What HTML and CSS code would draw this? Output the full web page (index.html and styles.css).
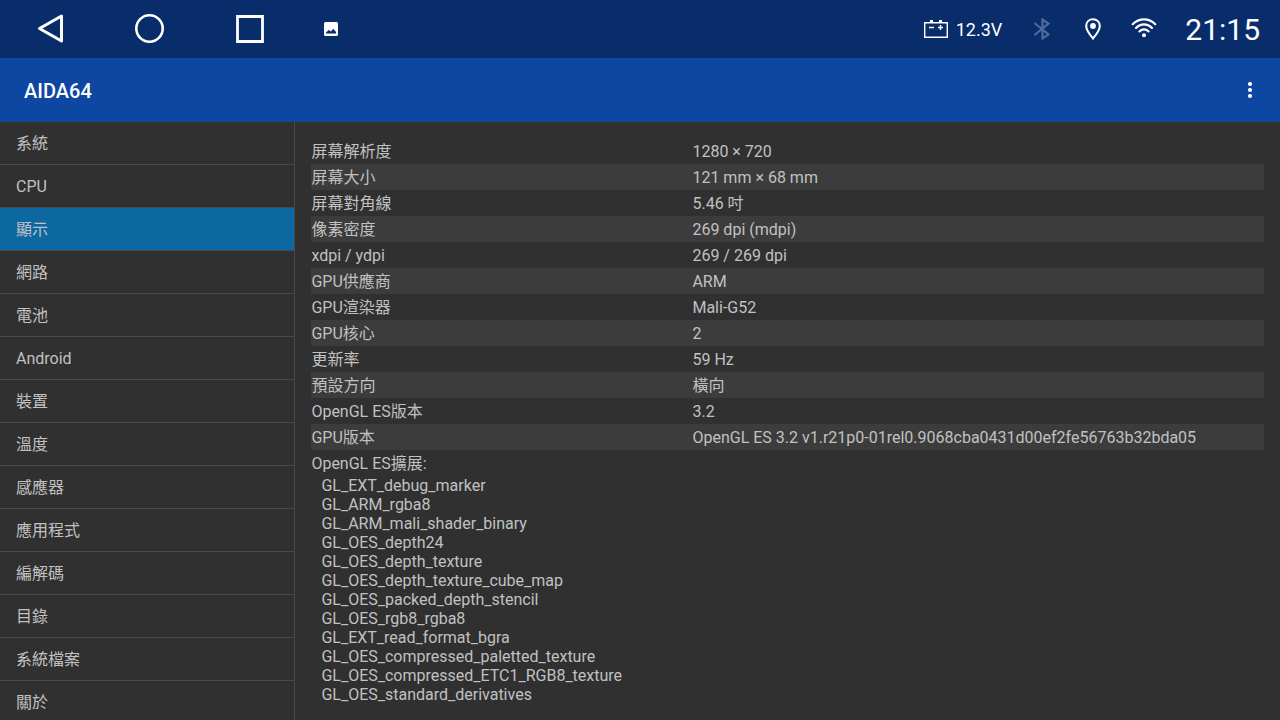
FILE: index.html
```html
<!DOCTYPE html>
<html lang="zh-Hant">
<head>
<meta charset="utf-8">
<meta name="viewport" content="width=device-width, initial-scale=1">
<title>AIDA64</title>
<link rel="stylesheet" href="styles.css">
</head>
<body>
<div class="screen">
  <header class="status-bar">
    <div class="nav-keys">
      <button class="nav-key" type="button" aria-label="返回"><svg width="30" height="32" viewBox="0 0 30 32"><path d="M26.5 3v25L4.500 15.500z" fill="none" stroke="#fff" stroke-width="3" stroke-linejoin="round"/></svg></button>
      <button class="nav-key" type="button" aria-label="主畫面"><svg width="30" height="30" viewBox="0 0 30 30"><circle cx="14.5" cy="14.5" r="13.2" fill="none" stroke="#fff" stroke-width="2.6"/></svg></button>
      <button class="nav-key" type="button" aria-label="最近使用"><svg width="28" height="28" viewBox="0 0 28 28"><path d="M1.500 1.500h25v25h-25z" fill="none" stroke="#fff" stroke-width="2.800"/></svg></button>
      <button class="nav-key nav-key-small" type="button" aria-label="螢幕截圖"><svg width="14" height="14" viewBox="0 0 14 14"><path fill="#fff" fill-rule="evenodd" d="M1.500 0h11A1.500 1.500 0 0 1 14 1.500v11a1.500 1.500 0 0 1-1.500 1.500h-11A1.500 1.500 0 0 1 0 12.500v-11A1.500 1.500 0 0 1 1.500 0zM2 11.500h10V10L9.200 6.800 7 9.500 4.800 8 2 10.500z"/></svg></button>
    </div>
    <div class="status-icons">
      <svg class="battery" width="24" height="18" viewBox="0 0 24 18"><path d="M.7 2.700h22.600v14.600H.7z" fill="none" stroke="#fff" stroke-width="1.400"/><path d="M6 0h3v2.500H6zM15 0h3v2.500h-3zM5 6.800h5v1.400H5zM14 6.800h5v1.400h-5zM15.800 5h1.400v5h-1.400z" fill="#fff"/></svg>
      <span class="voltage">12.3V</span>
      <svg class="bluetooth" width="18" height="22" viewBox="0 0 18 22"><path d="M1.500 5l14 11.500L9.500 20.500v-19L15.500 5.500 1.500 17" fill="none" stroke="#4f6a9c" stroke-width="2.200"/></svg>
      <svg class="pin" width="16" height="22" viewBox="0 0 16 22"><path d="M8 1.200c-4 0-6.800 2.900-6.800 6.800C1.200 12.500 5.500 17.500 8 20.500c2.500-3 6.800-8 6.800-12.500 0-3.900-2.800-6.800-6.800-6.800z" fill="none" stroke="#fff" stroke-width="2"/><circle cx="8" cy="8" r="2.900" fill="#fff"/></svg>
      <svg class="wifi" width="26" height="22" viewBox="0 0 26 22"><g fill="none" stroke="#fff" stroke-width="2.200" stroke-linecap="round"><path d="M1.700 6.300C8-.2 18-.2 24.300 6.300"/><path d="M5 9.900c4.500-4.700 11.500-4.700 16 0"/><path d="M8.400 13.400c2.600-2.700 6.600-2.700 9.200 0"/></g><circle cx="13" cy="17.300" r="2" fill="#fff"/></svg>
      <time class="clock">21:15</time>
    </div>
  </header>
  <div class="app-bar">
    <h1 class="app-title">AIDA64</h1>
    <button class="more" type="button" aria-label="更多選項"><svg width="24" height="24" viewBox="0 0 24 24" fill="#fff"><circle cx="12" cy="6" r="2.100"/><circle cx="12" cy="12" r="2.100"/><circle cx="12" cy="18" r="2.100"/></svg></button>
  </div>
  <div class="content">
    <nav class="menu">
      <a class="menu-item" href="#">系統</a>
      <a class="menu-item" href="#">CPU</a>
      <a class="menu-item selected" href="#" aria-current="page">顯示</a>
      <a class="menu-item" href="#">網路</a>
      <a class="menu-item" href="#">電池</a>
      <a class="menu-item" href="#">Android</a>
      <a class="menu-item" href="#">裝置</a>
      <a class="menu-item" href="#">溫度</a>
      <a class="menu-item" href="#">感應器</a>
      <a class="menu-item" href="#">應用程式</a>
      <a class="menu-item" href="#">編解碼</a>
      <a class="menu-item" href="#">目錄</a>
      <a class="menu-item" href="#">系統檔案</a>
      <a class="menu-item" href="#">關於</a>
    </nav>
    <main class="details">
      <table class="info">
        <tbody>
          <tr><th scope="row">屏幕解析度</th><td>1280 × 720</td></tr>
          <tr><th scope="row">屏幕大小</th><td>121 mm × 68 mm</td></tr>
          <tr><th scope="row">屏幕對角線</th><td>5.46 吋</td></tr>
          <tr><th scope="row">像素密度</th><td>269 dpi (mdpi)</td></tr>
          <tr><th scope="row">xdpi / ydpi</th><td>269 / 269 dpi</td></tr>
          <tr><th scope="row">GPU供應商</th><td>ARM</td></tr>
          <tr><th scope="row">GPU渲染器</th><td>Mali-G52</td></tr>
          <tr><th scope="row">GPU核心</th><td>2</td></tr>
          <tr><th scope="row">更新率</th><td>59 Hz</td></tr>
          <tr><th scope="row">預設方向</th><td>橫向</td></tr>
          <tr><th scope="row">OpenGL ES版本</th><td>3.2</td></tr>
          <tr><th scope="row">GPU版本</th><td>OpenGL ES 3.2 v1.r21p0-01rel0.9068cba0431d00ef2fe56763b32bda05</td></tr>
        </tbody>
      </table>
      <h2 class="extensions-title">OpenGL ES擴展:</h2>
      <ul class="extensions">
        <li>GL_EXT_debug_marker</li>
        <li>GL_ARM_rgba8</li>
        <li>GL_ARM_mali_shader_binary</li>
        <li>GL_OES_depth24</li>
        <li>GL_OES_depth_texture</li>
        <li>GL_OES_depth_texture_cube_map</li>
        <li>GL_OES_packed_depth_stencil</li>
        <li>GL_OES_rgb8_rgba8</li>
        <li>GL_EXT_read_format_bgra</li>
        <li>GL_OES_compressed_paletted_texture</li>
        <li>GL_OES_compressed_ETC1_RGB8_texture</li>
        <li>GL_OES_standard_derivatives</li>
      </ul>
    </main>
  </div>
</div>
</body>
</html>
```
FILE: styles.css
```css
* {
  box-sizing: border-box;
}

body {
  margin: 0;
  background: #303030;
  color: #c1c1c1;
  font: 16px/24px Roboto, "Noto Sans CJK TC", sans-serif;
}

button {
  display: flex;
  align-items: center;
  justify-content: center;
  padding: 0;
  border: 0;
  background: none;
}

svg {
  display: block;
  flex: none;
}

.screen {
  display: flex;
  flex-direction: column;
  height: 100vh;
  overflow: hidden;
}

.status-bar {
  display: flex;
  flex: none;
  justify-content: space-between;
  height: 58px;
  background: #082d6a;
  color: #fff;
}

.nav-keys {
  display: flex;
}

.nav-key {
  width: 100px;
}

.nav-key-small {
  width: 62px;
}

.status-icons {
  display: flex;
  align-items: center;
  padding-right: 20px;
}

.voltage {
  margin-left: 8px;
  padding-top: 2px;
  font-size: 18px;
}

.bluetooth {
  margin-left: 31px;
}

.pin {
  margin-left: 34px;
}

.wifi {
  margin-left: 30px;
}

.clock {
  margin-left: 28px;
  padding-top: 2px;
  font-size: 30px;
}

.app-bar {
  display: flex;
  flex: none;
  align-items: center;
  justify-content: space-between;
  height: 64px;
  padding: 0 10px 0 24px;
  background: #0d47a1;
  color: #fff;
}

.app-title {
  margin: 0;
  padding-top: 2px;
  font-size: 20px;
  font-weight: 500;
}

.more {
  width: 40px;
  height: 48px;
}

.content {
  display: flex;
  flex: 1;
  min-height: 0;
}

.menu {
  box-sizing: content-box;
  flex: none;
  width: 23%;
  overflow: hidden;
  border-right: 1px solid #4a4a4a;
}

.menu-item {
  display: block;
  padding: 10px 16px 8px;
  border-bottom: 1px solid #4a4a4a;
  color: inherit;
  text-decoration: none;
}

.selected {
  background: #0d67a1;
}

.details {
  flex: 1;
  padding: 16px;
  overflow: hidden;
}

.info {
  width: 100%;
  border-collapse: collapse;
  table-layout: fixed;
}

.info th {
  width: 40%;
  padding: 2px 0 0;
  font-weight: 400;
  text-align: left;
}

.info td {
  padding: 2px 0 0;
}

.info tr:nth-child(even) {
  background: #3c3c3c;
}

.extensions-title {
  margin: 0;
  padding-top: 2px;
  font-size: 16px;
  font-weight: 400;
}

.extensions {
  margin: 0;
  padding: 0 0 0 10px;
  line-height: 19px;
  list-style: none;
}
```
